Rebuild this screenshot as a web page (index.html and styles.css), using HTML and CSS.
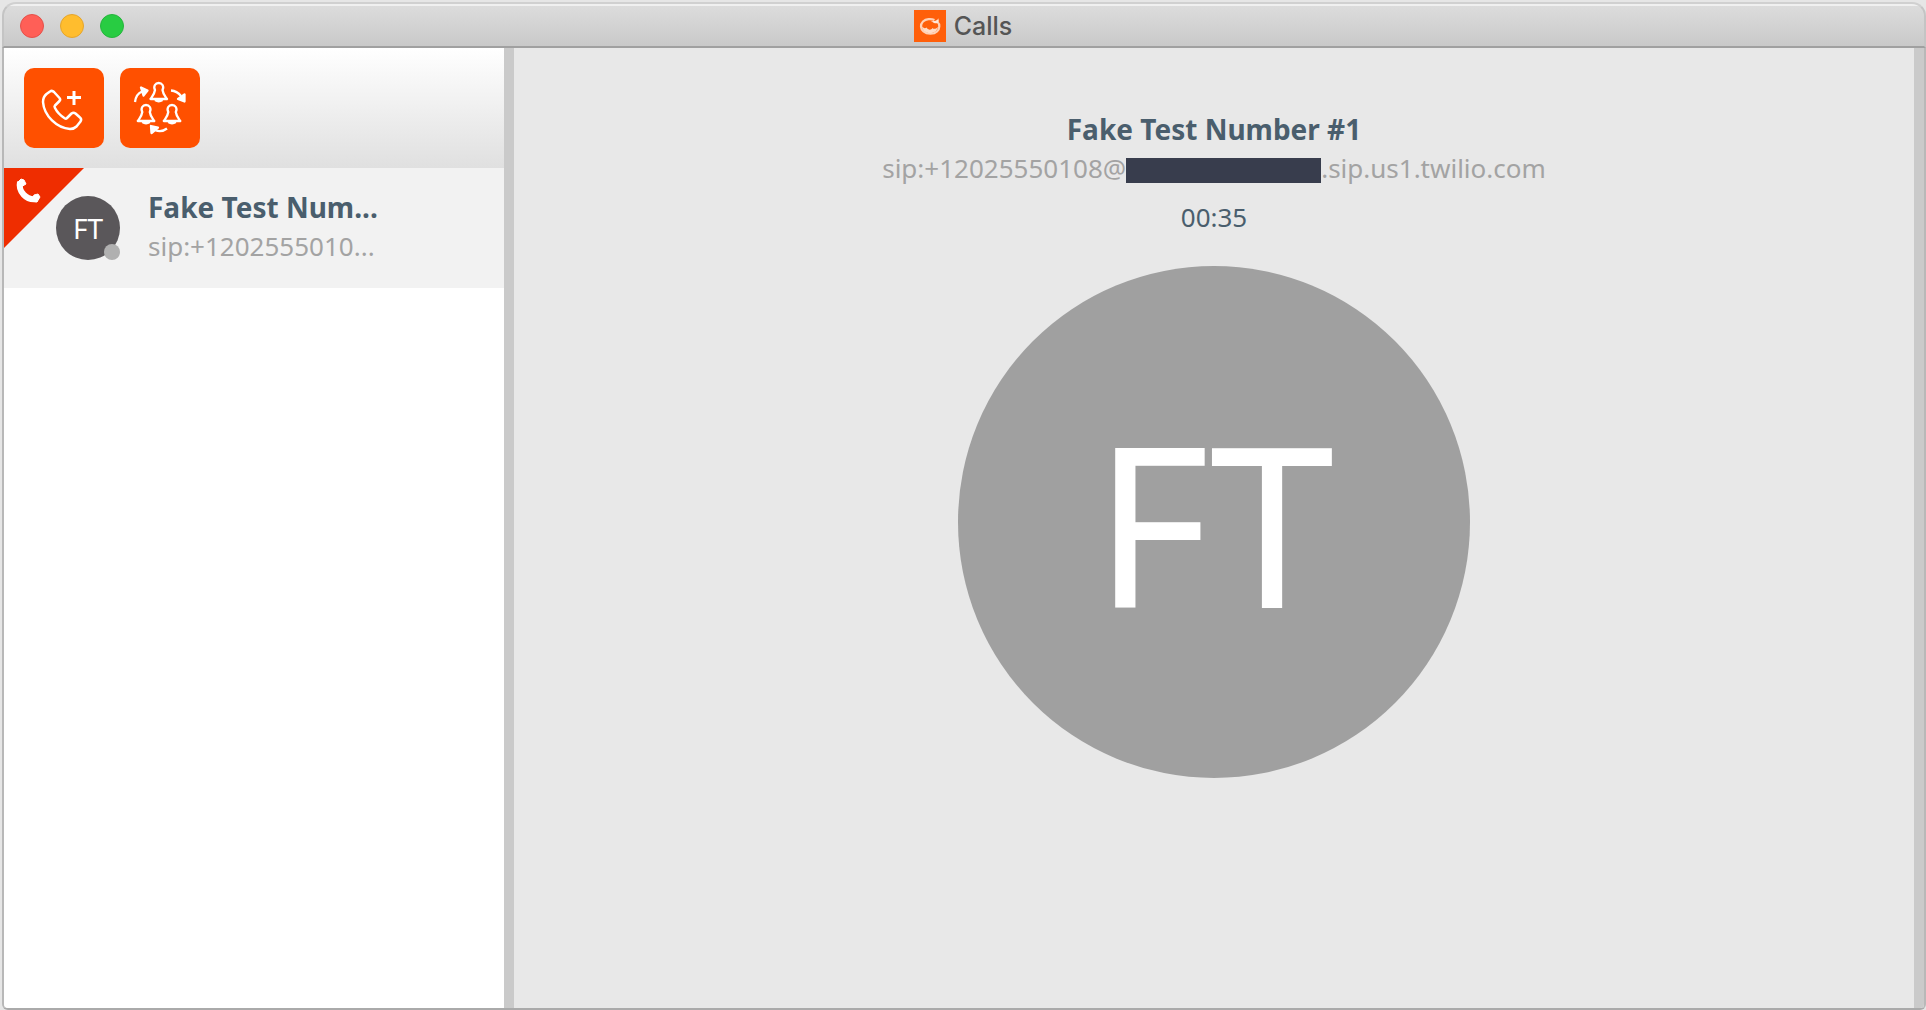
FILE: index.html
```html
<!DOCTYPE html>
<html lang="en">
<head>
<meta charset="utf-8">
<title>Calls</title>
<link rel="stylesheet" href="styles.css">
</head>
<body>
<div class="window">
  <header class="titlebar">
    <div class="lights">
      <button class="light light-close" type="button" aria-label="Close"></button>
      <button class="light light-minimize" type="button" aria-label="Minimize"></button>
      <button class="light light-zoom" type="button" aria-label="Zoom"></button>
    </div>
    <h1 class="title">
      <svg class="logo" viewBox="0 0 32 32" aria-hidden="true">
        <rect width="32" height="32" fill="#ff5f0a"/>
        <path d="M20.500 10C17 8.500 12 8.800 9 11.500C6 14.500 6.500 19 9.500 21.500C13 24.500 20 24.500 23 21.500C26 18.500 26 14 23.500 12" fill="none" stroke="#ffd0b5" stroke-width="2.200"/>
        <path d="M17 11C20 11.500 24.500 10.500 24 8C26 12 24 14 20 13Z" fill="#ffe6d8"/>
        <path d="M8 16C9 18 11 19 12.500 17.500C14 20 17 20.500 18.500 18C19.500 19.500 22 19 24 17C23 21.500 19.500 23 16 23C12 23 8.500 21 8 16Z" fill="#ffdcc8"/>
      </svg>
      <span>Calls</span>
    </h1>
  </header>
  <div class="body">
    <aside class="sidebar">
      <div class="toolbar">
        <button class="tool" type="button" aria-label="New call">
          <svg viewBox="0 0 80 80" fill="none" stroke="#fff" stroke-width="2.500" stroke-linejoin="round" stroke-linecap="round">
            <path d="M22.500 26L26 23.500Q28 22 30 24L35.500 30Q36.800 31.500 35.500 33L31 37.500Q30 38.500 31 40C33 44 37 48 41 50.500Q42 51 43 50L47.500 45.500Q49.500 44 51.500 45.500L56 49.500Q58 51 56.500 53.500L52.500 58.500Q50 61 46 61C33 60 20 48 19 34Q19 29 22.500 26Z"/>
            <path d="M50 23V37M43 29.500H57" stroke-width="3" stroke-linecap="butt"/>
          </svg>
        </button>
        <button class="tool" type="button" aria-label="Ring group">
          <svg viewBox="0 0 80 80" fill="none" stroke="#fff" stroke-width="2.300" stroke-linejoin="round">
            <g id="bell"><path d="M35 22C33 18 35.500 15 38.700 15S44.500 18 42.500 22C43 26 45 28 47 31H30.500C32.500 28 34.500 26 35 22Z"/><path d="M35 32Q38.700 34.500 42.500 32"/></g>
            <use href="#bell" x="-12.700" y="22"/>
            <use href="#bell" x="13.300" y="22"/>
            <path d="M15 34Q16 26 22 23.500M51 22.500Q57 23 61 28M47 60.500Q41 65 35 62"/>
            <path d="M21 19.500L27.500 22.500L23.500 27.500ZM64.500 26.500L64.500 33.500L58 31ZM31 58L38 59.500L31.500 65Z" fill="#fff"/>
          </svg>
        </button>
      </div>
      <ul class="calls">
        <li class="call">
          <svg class="corner" viewBox="0 0 80 80" aria-hidden="true">
            <path d="M0 0H80L0 80Z" fill="#ef2d00"/>
            <path d="M16 14C14 23 22 33 33 31" fill="none" stroke="#fff" stroke-width="6"/>
            <path d="M17 11L20 12L22 16L17 19L13 15ZM30 27L34 26L36 29L33 34L27 33Z" fill="#fff" stroke="#fff" stroke-width="1" stroke-linejoin="round"/>
          </svg>
          <div class="avatar">FT<span class="presence"></span></div>
          <div class="call-text">
            <div class="name">Fake Test Num...</div>
            <div class="address">sip:+1202555010...</div>
          </div>
        </li>
      </ul>
    </aside>
    <main class="detail">
      <h2 class="name">Fake Test Number #1</h2>
      <div class="address">sip:+12025550108@<span class="redacted"></span>.sip.us1.twilio.com</div>
      <div class="timer">00:35</div>
      <div class="portrait">FT</div>
    </main>
  </div>
</div>
</body>
</html>
```
FILE: styles.css
```css
* {
  box-sizing: border-box;
}

body {
  margin: 0;
  background: #e6e6e6;
  font-family: "Noto Sans", "Open Sans", sans-serif;
  font-size: 26px;
  line-height: 39px;
  color: #4a5e6d;
}

.window {
  display: flex;
  flex-direction: column;
  min-height: 100vh;
  padding: 2px 0 0 2px;
}

.titlebar {
  display: grid;
  grid-template-columns: 1fr auto 1fr;
  align-items: center;
  height: 46px;
  padding: 2px 18px 0 16px;
  border: 2px solid #c4c4c4;
  border-top-color: #d0d0d0;
  border-bottom-color: #a0a0a0;
  border-radius: 14px 14px 0 0;
  background: linear-gradient(#f0f0f0 2px, #dcdcdc 2px, #c9c9c9);
}

.lights {
  display: flex;
  gap: 16px;
}

.light {
  width: 24px;
  height: 24px;
  padding: 0;
  border: 1px solid;
  border-radius: 50%;
}

.light-close {
  background: #ff5f57;
  border-color: #e5504a;
}

.light-minimize {
  background: #ffbd2e;
  border-color: #e5a52c;
}

.light-zoom {
  background: #28cc42;
  border-color: #25b53c;
}

.title {
  display: flex;
  align-items: center;
  gap: 8px;
  margin: 0;
  font-family: Inter, "Liberation Sans", sans-serif;
  font-size: 25px;
  font-weight: 500;
  line-height: 32px;
  color: #555;
}

.logo {
  width: 32px;
  height: 32px;
}

.body {
  display: flex;
  flex: 1;
  border: 2px solid #b8b8b8;
  border-top: 0;
  border-bottom-color: #aaa;
  border-radius: 0 0 6px 6px;
  overflow: hidden;
}

.sidebar {
  flex: 0 0 510px;
  border-right: 10px solid #cacaca;
  background: #fff;
}

.toolbar {
  display: flex;
  gap: 16px;
  padding: 20px;
  background: linear-gradient(#fff, #e0e0e0);
}

.tool {
  width: 80px;
  height: 80px;
  padding: 0;
  border: 0;
  border-radius: 10px;
  background: #ff5000;
}

.tool svg {
  display: block;
}

.calls {
  margin: 0;
  padding: 0;
  list-style: none;
}

.call {
  position: relative;
  display: flex;
  gap: 28px;
  height: 120px;
  padding: 20px 20px 20px 52px;
  background: #f2f2f2;
}

.corner {
  position: absolute;
  top: 0;
  left: 0;
  width: 80px;
  height: 80px;
}

.avatar {
  position: relative;
  width: 64px;
  height: 64px;
  margin-top: 8px;
  border-radius: 50%;
  background: #5a575a;
  color: #fff;
  font-size: 28px;
  line-height: 64px;
  text-align: center;
}

.presence {
  position: absolute;
  right: 0;
  bottom: 0;
  width: 16px;
  height: 16px;
  border-radius: 50%;
  background: #b0b0b0;
}

.name {
  margin: 0;
  font-size: 28px;
  font-weight: 700;
  color: #4a5e6d;
}

.address {
  color: #a3a3a3;
}

.detail {
  display: flex;
  flex: 1;
  flex-direction: column;
  align-items: center;
  padding-top: 62px;
  border-right: 10px solid #cacaca;
  background: #e8e8e8;
}

.redacted {
  display: inline-block;
  width: 195px;
  height: 25px;
  vertical-align: -5px;
  background: #383d4d;
}

.timer {
  margin: 10px 0 29px;
}

.portrait {
  width: 512px;
  height: 512px;
  border-radius: 50%;
  background: #a0a0a0;
  color: #fff;
  font-size: 224px;
  line-height: 512px;
  text-align: center;
}
```
